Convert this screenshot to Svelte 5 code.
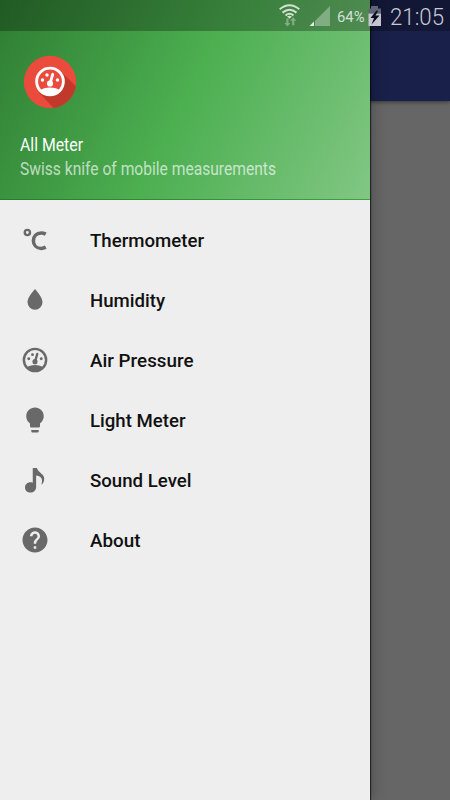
<script>
	let items = [
		{name: "Thermometer", icon: "celsius", width: 114},
		{name: "Humidity", icon: "drop", width: 75},
		{name: "Air Pressure", icon: "gauge", width: 103.5},
		{name: "Light Meter", icon: "bulb", width: 95.5},
		{name: "Sound Level", icon: "note", width: 101.5},
		{name: "About", icon: "help", width: 50.5},
	]

	const icons = {
		drop: "M12 3.100c-2 2.500-6 6.800-6 10.600a6 6 0 0 0 12 0c0-3.800-4-8.100-6-10.600z",
		bulb: "M9 21c0 .5.400 1 1 1h4c.600 0 1-.5 1-1v-1H9v1zm3-19C8.100 2 5 5.100 5 9c0 2.400 1.200 4.500 3 5.700V17c0 .5.400 1 1 1h6c.600 0 1-.5 1-1v-2.300c1.800-1.300 3-3.400 3-5.700 0-3.900-3.100-7-7-7z",
		note: "M10.200 2.300V14.200C9.600 13.900 9 13.800 8.300 13.800C5.900 13.800 4 15.500 4 17.900S5.900 22 8.400 22s4.500-1.900 4.500-4.500V8.300c2.700.5 4.700 1.500 4.700 4.200 0 1.200-.2 2.200-.5 3.300 1.400-1.200 2.300-2.900 2.300-5.100C19.400 7.200 14.900 6.300 13.500 2.300z",
		help: "M12 2C6.480 2 2 6.480 2 12s4.480 10 10 10 10-4.480 10-10S17.520 2 12 2zm1 17h-2v-2h2v2zm2.070-7.750l-.9.920C13.450 12.900 13 13.500 13 15h-2v-.5c0-1.100.450-2.100 1.170-2.830l1.240-1.260c.370-.360.590-.860.590-1.410 0-1.100-.9-2-2-2s-2 .9-2 2H8c0-2.210 1.790-4 4-4s4 1.790 4 4c0 .880-.360 1.680-.930 2.250z",
	}
</script>

{#snippet gauge()}
	<circle cx="12" cy="12" r="8.900" fill="none" stroke="currentColor" stroke-width="1.950" />
	<path d="M5.300 18C8 15.300 16 15.300 18.700 18 15 22 9 22 5.300 18z" fill="currentColor" />
	<path d="M12 13.500L13.800 7.200" stroke="currentColor" stroke-width="1.900" stroke-linecap="round" />
	<circle cx="12" cy="13.300" r="2.050" fill="currentColor" />
	<circle cx="7" cy="11" r="1.150" fill="currentColor" />
	<circle cx="10" cy="7.700" r="1.150" fill="currentColor" />
	<circle cx="17" cy="11" r="1.150" fill="currentColor" />
{/snippet}

<div class="screen">
	<div class="page">
		<div class="appbar"></div>
	</div>

	<div class="drawer">
		<div class="header">
			<svg class="logo" viewBox="0 0 54 54">
				<defs>
					<clipPath id="disc"><circle cx="27" cy="27" r="26.200" /></clipPath>
				</defs>
				<circle cx="27" cy="27" r="26.200" fill="#ea4b3c" />
				<path clip-path="url(#disc)" d="M38 16.500L60 38.500 50 56 33 55.500 16 37.500z" fill="#c0392b" />
				<circle cx="27" cy="26.500" r="13" fill="#ea4b3c" />
				<g class="logoGauge" transform="translate(9 8.500) scale(1.500)">{@render gauge()}</g>
			</svg>
			<svg class="headline" width="300" height="56">
				<text class="title" x="0" y="21" textLength="63" lengthAdjust="spacingAndGlyphs">All Meter</text>
				<text class="subtitle" x="0" y="45" textLength="256" lengthAdjust="spacingAndGlyphs">Swiss knife of mobile measurements</text>
			</svg>
		</div>
		<div class="menu">
			{#each items as item (item.name)}
				<div class="item">
					<svg class="icon" viewBox="0 0 24 24">
						{#if item.icon == "gauge"}
							{@render gauge()}
						{:else if item.icon == "celsius"}
							<circle cx="5.900" cy="6" r="2.100" fill="none" stroke="currentColor" stroke-width="1.900" />
							<path d="M20.600 7.300C19.300 6.600 18.200 6.300 16.900 6.300C13.200 6.300 10.700 9 10.700 12.500S13.200 18.700 16.900 18.700C18.200 18.700 19.300 18.400 20.600 17.700" fill="none" stroke="currentColor" stroke-width="2.800" />
						{:else}
							<path d={icons[item.icon]} fill="currentColor" />
						{/if}
					</svg>
					<svg class="label" width="200" height="30">
						<text x="0" y="22" textLength={item.width} lengthAdjust="spacingAndGlyphs">{item.name}</text>
					</svg>
				</div>
			{/each}
		</div>
	</div>

	<div class="statusbar">
		<svg width="172" height="31" viewBox="278 0 172 31">
			<!-- wifi -->
			<g fill="none" stroke="#d3e0d3" stroke-width="2">
				<path d="M279.700 9.300Q289.500 1.300 299.300 9.300" />
				<path d="M282.500 12.600Q289.500 6.900 296.500 12.600" />
				<path d="M285.500 15.500Q289.500 12.100 293.500 15.500" />
			</g>
			<path d="M287 16.500Q289.500 15 292 16.500L289.500 18.800z" fill="#d3e0d3" />
			<path d="M286.300 18.500h2.200v4.500h2l-3.100 3.500-3.100-3.500h2zM292.100 25.300h2.200v-4.500h2l-3.100-3.500-3.100 3.500h2z" fill="#82ad84" />
			<!-- signal -->
			<path d="M315 21L330 6V26H315z" fill="#80ae82" />
			<path d="M309.500 26L314 21.500V26z" fill="#e4ede4" />
			<text class="percent" x="337" y="22" textLength="27.500" lengthAdjust="spacingAndGlyphs">64%</text>
			<!-- battery -->
			<path d="M371 6h7v3h-7z" fill="#606479" />
			<path d="M368.500 8.500h12.500v5h-12.500z" fill="#606479" />
			<path d="M368.500 13.500h12.500V26h-12.500z" fill="#c4c5ce" />
			<path d="M376.500 10.500L370.500 18H374L371.500 24.500 379.500 15.500H375.500L378 11z" fill="#0b0d1c" />
			<text class="clock" x="390" y="25" textLength="54" lengthAdjust="spacingAndGlyphs">21:05</text>
		</svg>
	</div>
</div>

<style>
	:global(body) {
		margin: 0;
		background-color: #666666;
	}

	.screen {
		display: grid;
		position: relative;
		width: 450px;
		height: 800px;
		overflow: hidden;
		font-family: Roboto, sans-serif;
		background-color: #666666;
	}

	.page, .drawer {
		grid-area: 1 / 1;
	}

	.appbar {
		height: 101px;
		background-color: #192049;
		box-shadow: 0 1px 4px rgba(0, 0, 0, 0.5);
	}

	.drawer {
		z-index: 1;
		display: flex;
		flex-direction: column;
		width: 370px;
		background-color: #eeeeee;
		box-shadow: 1px 0 1px rgba(0, 0, 0, 0.6), 2px 0 14px rgba(0, 0, 0, 0.25);
	}

	.header {
		display: flex;
		flex-direction: column;
		box-sizing: border-box;
		height: 200px;
		padding: 55px 0 0 20px;
		background: linear-gradient(117deg, #2e7d32, #4caf50 50%, #81c784);
		border-bottom: 1px solid rgba(20, 130, 30, 0.5);
	}

	.logo {
		width: 54px;
		height: 54px;
		margin-left: 3px;
	}

	.logoGauge {
		color: #ffffff;
	}

	.headline {
		margin-top: 21px;
	}

	.title, .subtitle {
		font-size: 18px;
		fill: #ffffff;
	}

	.subtitle {
		fill: rgba(255, 255, 255, 0.67);
	}

	.menu {
		padding-top: 10px;
	}

	.item {
		display: flex;
		align-items: center;
		height: 60px;
		padding-left: 20px;
		gap: 40px;
	}

	.icon {
		width: 30px;
		height: 30px;
		color: #696969;
	}

	.label text {
		font-size: 19px;
		font-weight: 500;
		fill: #111111;
	}

	.statusbar {
		position: absolute;
		top: 0;
		left: 0;
		right: 0;
		z-index: 2;
		display: flex;
		justify-content: flex-end;
		height: 31px;
		background-color: rgba(0, 0, 0, 0.27);
	}

	.percent {
		font-size: 15px;
		fill: #d3e0d3;
	}

	.clock {
		font-size: 24px;
		font-weight: 300;
		fill: #c9cad5;
	}
</style>
